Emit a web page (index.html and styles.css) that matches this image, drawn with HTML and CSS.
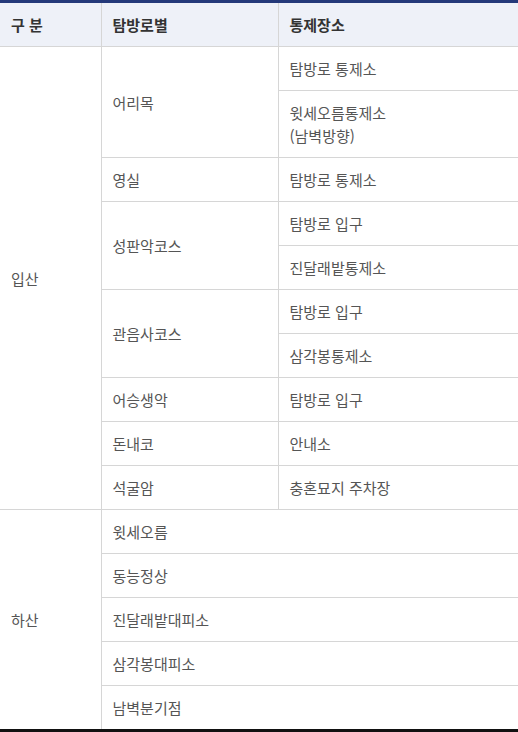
FILE: index.html
```html
<!DOCTYPE html>
<html lang="ko">
<head>
<meta charset="utf-8">
<link rel="stylesheet" href="styles.css">
</head>
<body>
<table class="tbl">
  <colgroup>
    <col class="c1"><col class="c2"><col class="c3">
  </colgroup>
  <thead>
    <tr><th class="first">구 분</th><th>탐방로별</th><th>통제장소</th></tr>
  </thead>
  <tbody>
    <tr><td class="first" rowspan="10">입산</td><td rowspan="2">어리목</td><td>탐방로 통제소</td></tr>
    <tr><td>윗세오름통제소<br>(남벽방향)</td></tr>
    <tr><td>영실</td><td>탐방로 통제소</td></tr>
    <tr><td rowspan="2">성판악코스</td><td>탐방로 입구</td></tr>
    <tr><td>진달래밭통제소</td></tr>
    <tr><td rowspan="2">관음사코스</td><td>탐방로 입구</td></tr>
    <tr><td>삼각봉통제소</td></tr>
    <tr><td>어승생악</td><td>탐방로 입구</td></tr>
    <tr><td>돈내코</td><td>안내소</td></tr>
    <tr><td>석굴암</td><td>충혼묘지 주차장</td></tr>
    <tr><td class="first" rowspan="5">하산</td><td colspan="2">윗세오름</td></tr>
    <tr><td colspan="2">동능정상</td></tr>
    <tr><td colspan="2">진달래밭대피소</td></tr>
    <tr><td colspan="2">삼각봉대피소</td></tr>
    <tr><td colspan="2">남벽분기점</td></tr>
  </tbody>
</table>
</body>
</html>
```
FILE: styles.css
```css
html, body { margin: 0; padding: 0; background: #fff; }
body { font-family: "Noto Sans CJK KR", "Noto Sans", sans-serif; }
.tbl {
  width: 518px;
  border-collapse: collapse;
  table-layout: fixed;
  border-top: 3px solid #24397a;
  border-bottom: 3px solid #111;
  font-size: 15px;
  color: #555;
}
.c1 { width: 101px; }
.c2 { width: 177px; }
.c3 { width: 240px; }
.tbl th, .tbl td {
  border: 1px solid #d6d6d6;
  padding: 10px 10px 10px 11px;
  text-align: left;
  line-height: 23px;
  vertical-align: middle;
  height: 23px;
}
.tbl .first { border-left: none; }
.tbl th {
  background: #eef1f8;
  color: #333;
  font-weight: 700;
}
```
